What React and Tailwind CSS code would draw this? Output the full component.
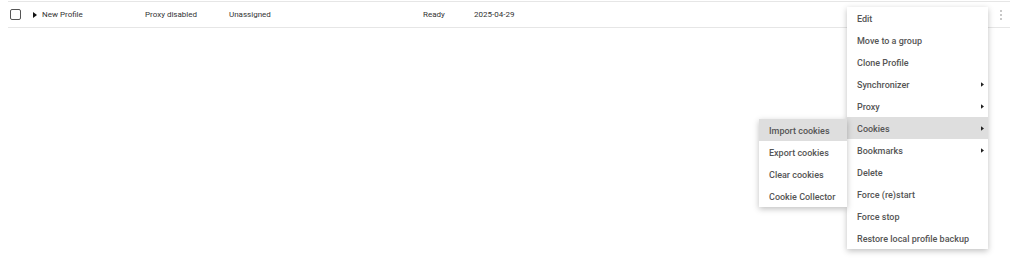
import { useState } from 'react';

const mainItems = [
  { label: 'Edit' },
  { label: 'Move to a group' },
  { label: 'Clone Profile' },
  { label: 'Synchronizer', sub: true },
  { label: 'Proxy', sub: true },
  { label: 'Cookies', sub: true, active: true },
  { label: 'Bookmarks', sub: true },
  { label: 'Delete' },
  { label: 'Force (re)start' },
  { label: 'Force stop' },
  { label: 'Restore local profile backup' },
];

const cookieItems = [
  { label: 'Import cookies', active: true },
  { label: 'Export cookies' },
  { label: 'Clear cookies' },
  { label: 'Cookie Collector' },
];

const Caret = ({ className }) => (
  <svg viewBox="0 0 4 6" className={className}>
    <path d="M0 0 L4 3 L0 6 Z" fill="currentColor" />
  </svg>
);

const MenuItem = ({ label, sub, active }) => (
  <div
    className={`h-[22px] flex items-center justify-between pt-[4px] pl-[10px] pr-[4px] text-[9px] font-medium text-[#555] whitespace-nowrap ${
      active ? 'bg-[#dedede]' : ''
    }`}
  >
    <span>{label}</span>
    {sub && <Caret className="-mt-[4px] w-[3px] h-[5px] text-[#222]" />}
  </div>
);

const App = () => {
  const [checked, setChecked] = useState(false);

  return (
    <div className="relative w-[1024px] h-[258px] bg-white font-['Roboto',_'Liberation_Sans',_sans-serif] overflow-hidden">
      {/* Profile row */}
      <div className="px-2 pt-px">
        <div className="h-[27px] w-[1002px] border-y border-[#e6e6e6] flex items-center text-[8px] text-[#333]">
          <button
            onClick={() => setChecked(!checked)}
            className="ml-[2px] w-[11px] h-[11px] border-[1.5px] border-[#555] rounded-[2px] bg-white"
            aria-label="Select profile"
          />
          <Caret className="ml-[12px] w-[4px] h-[6px] text-[#111]" />
          <span className="ml-[5px] w-[103px]">New Profile</span>
          <span className="w-[84px]">Proxy disabled</span>
          <span className="w-[194px]">Unassigned</span>
          <span className="w-[51px]">Ready</span>
          <span>2025-04-29</span>
          <div className="ml-auto mr-[8px] flex flex-col gap-[2px]">
            <span className="w-[2px] h-[2px] bg-[#c8c8c8]" />
            <span className="w-[2px] h-[2px] bg-[#c8c8c8]" />
            <span className="w-[2px] h-[2px] bg-[#c8c8c8]" />
          </div>
        </div>
      </div>

      {/* Context menu */}
      <div className="absolute left-[847px] top-[7px] w-[141px] bg-white shadow-[0_2px_6px_rgba(0,0,0,0.25)]">
        {mainItems.map((item) => (
          <MenuItem key={item.label} {...item} />
        ))}
      </div>

      {/* Cookies submenu */}
      <div className="absolute left-[759px] top-[119px] w-[88px] bg-white shadow-[0_2px_6px_rgba(0,0,0,0.25)]">
        {cookieItems.map((item) => (
          <MenuItem key={item.label} {...item} />
        ))}
      </div>
    </div>
  );
};

export default App;
